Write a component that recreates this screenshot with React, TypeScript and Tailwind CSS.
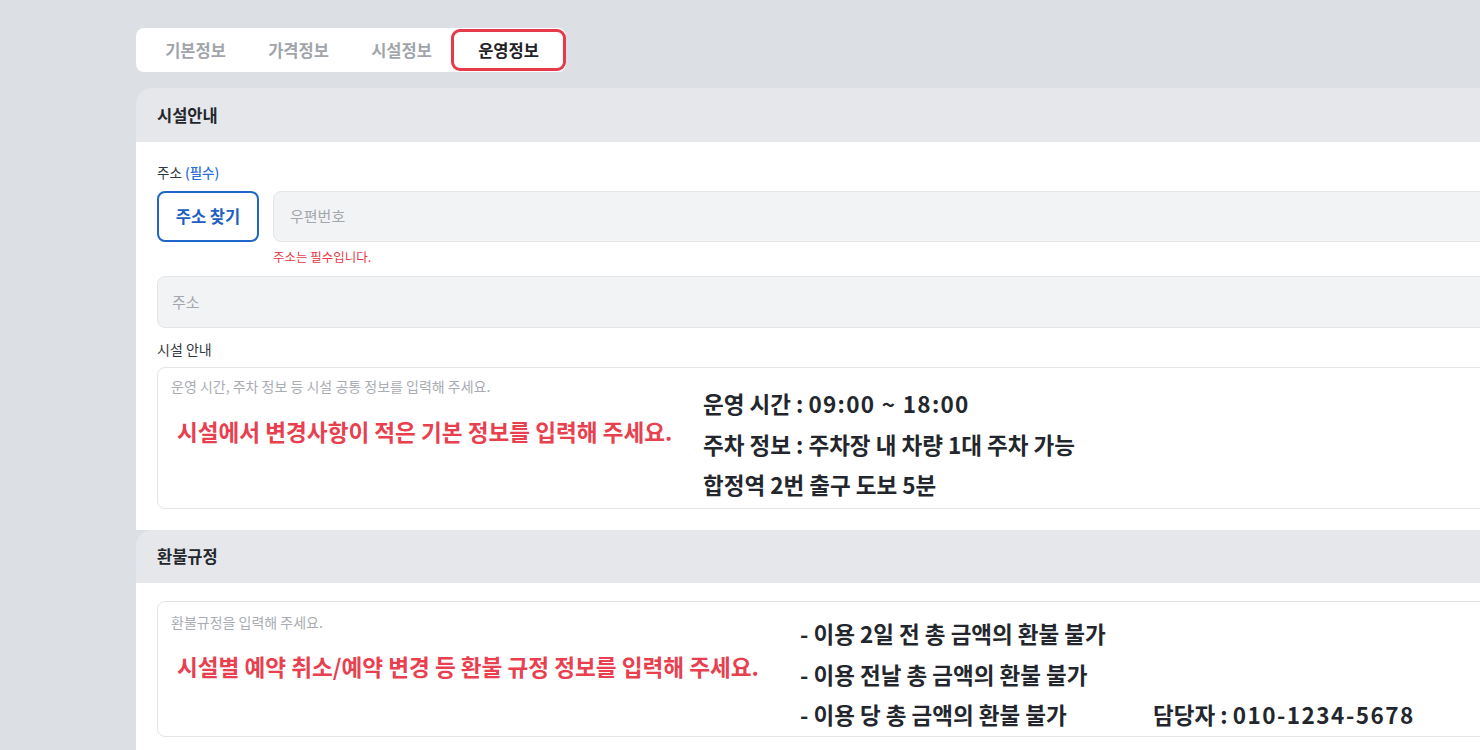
import React from 'react';

const FONT = { fontFamily: '"Noto Sans CJK KR", "Noto Sans", sans-serif' };

const tabs = ['기본정보', '가격정보', '시설정보'];

function Tabs() {
  return (
    <div className="flex items-center h-[44px] w-[430px] bg-white rounded-lg pl-[8px]">
      {tabs.map((t) => (
        <div key={t} className="w-[103px] text-center text-[16.5px] font-bold text-[#a1a5ab]">
          {t}
        </div>
      ))}
      <div className="-ml-[2px] flex items-center justify-center w-[115px] h-[42px] border-[3px] border-[#e63a4b] rounded-[9px] text-[16.5px] font-bold text-[#1f2328]">
        운영정보
      </div>
    </div>
  );
}

function SectionHeader({ title, h }: { title: string; h: string }) {
  return (
    <div className={`${h} flex items-center pl-[21px] bg-[#e5e7eb] rounded-tl-2xl`}>
      <span className="text-[16.5px] font-semibold text-[#23272d]">{title}</span>
    </div>
  );
}

export default function App() {
  return (
    <div style={FONT} className="w-full h-[750px] overflow-hidden bg-[#dcdfe3] pl-[136px] pt-[28px]">
      <Tabs />

      {/* 시설안내 */}
      <div className="mt-[16px] w-[1400px]">
        <SectionHeader title="시설안내" h="h-[54px]" />
        <div className="bg-white px-[21px] pt-[21px] pb-[21px]">
          <div className="text-[13.5px] leading-[18px] text-[#33373d]">
            주소 <span className="text-[#2f6fd8] font-medium">(필수)</span>
          </div>
          <div className="mt-[10px] flex gap-[14px]">
            <button className="w-[102px] h-[51px] shrink-0 border-2 border-[#1e66c9] rounded-lg text-[16.5px] font-semibold text-[#1e5fbf] bg-white">
              주소 찾기
            </button>
            <div className="flex-1 h-[51px] flex items-center px-[16px] bg-[#f2f3f5] border border-[#e3e5e8] rounded-lg text-[15px] text-[#a3a7ad]">
              우편번호
            </div>
          </div>
          <div className="mt-[7px] pl-[116px] text-[12.5px] leading-[16px] text-[#e5394a]">주소는 필수입니다.</div>
          <div className="mt-[11px] h-[52px] flex items-center px-[14px] bg-[#f2f3f5] border border-[#e3e5e8] rounded-lg text-[15px] text-[#a3a7ad]">
            주소
          </div>
          <div className="mt-[12px] text-[14px] leading-[18px] text-[#33373d]">시설 안내</div>
          <div className="relative mt-[9px] h-[142px] border border-[#e3e5e8] rounded-lg bg-white px-[13px] pt-[9px]">
            <div className="text-[14px] leading-[18px] text-[#a9adb3]">
              운영 시간, 주차 정보 등 시설 공통 정보를 입력해 주세요.
            </div>
            <div className="absolute left-[19px] top-[49px] text-[22.6px] leading-[30px] font-bold text-[#e8404f] whitespace-nowrap">
              시설에서 변경사항이 적은 기본 정보를 입력해 주세요.
            </div>
            <div className="absolute left-[545px] top-[15px] text-[22.5px] leading-[40.5px] font-semibold text-[#23272d] whitespace-nowrap">
              <div>
                운영 시간 : <span className="tracking-[1.3px]">09:00 ~ 18:00</span>
              </div>
              <div>주차 정보 : 주차장 내 차량 1대 주차 가능</div>
              <div>합정역 2번 출구 도보 5분</div>
            </div>
          </div>
        </div>
      </div>

      {/* 환불규정 */}
      <div className="w-[1400px]">
        <SectionHeader title="환불규정" h="h-[53px]" />
        <div className="bg-white px-[21px] pt-[18px] pb-[30px]">
          <div className="relative h-[136px] border border-[#e3e5e8] rounded-lg bg-white px-[13px] pt-[11px]">
            <div className="text-[14px] leading-[18px] text-[#a9adb3]">환불규정을 입력해 주세요.</div>
            <div className="absolute left-[19px] top-[50px] text-[22.6px] leading-[30px] font-bold text-[#e8404f] whitespace-nowrap">
              시설별 예약 취소/예약 변경 등 환불 규정 정보를 입력해 주세요.
            </div>
            <div className="absolute left-[642px] top-[11px] text-[22.5px] leading-[40.5px] font-semibold text-[#23272d] whitespace-nowrap">
              <div>- 이용 2일 전 총 금액의 환불 불가</div>
              <div>- 이용 전날 총 금액의 환불 불가</div>
              <div className="flex">
                <span className="w-[353px]">- 이용 당 총 금액의 환불 불가</span>
                <span>
                  담당자 : <span className="tracking-[1.5px]">010-1234-5678</span>
                </span>
              </div>
            </div>
          </div>
        </div>
      </div>
    </div>
  );
}
